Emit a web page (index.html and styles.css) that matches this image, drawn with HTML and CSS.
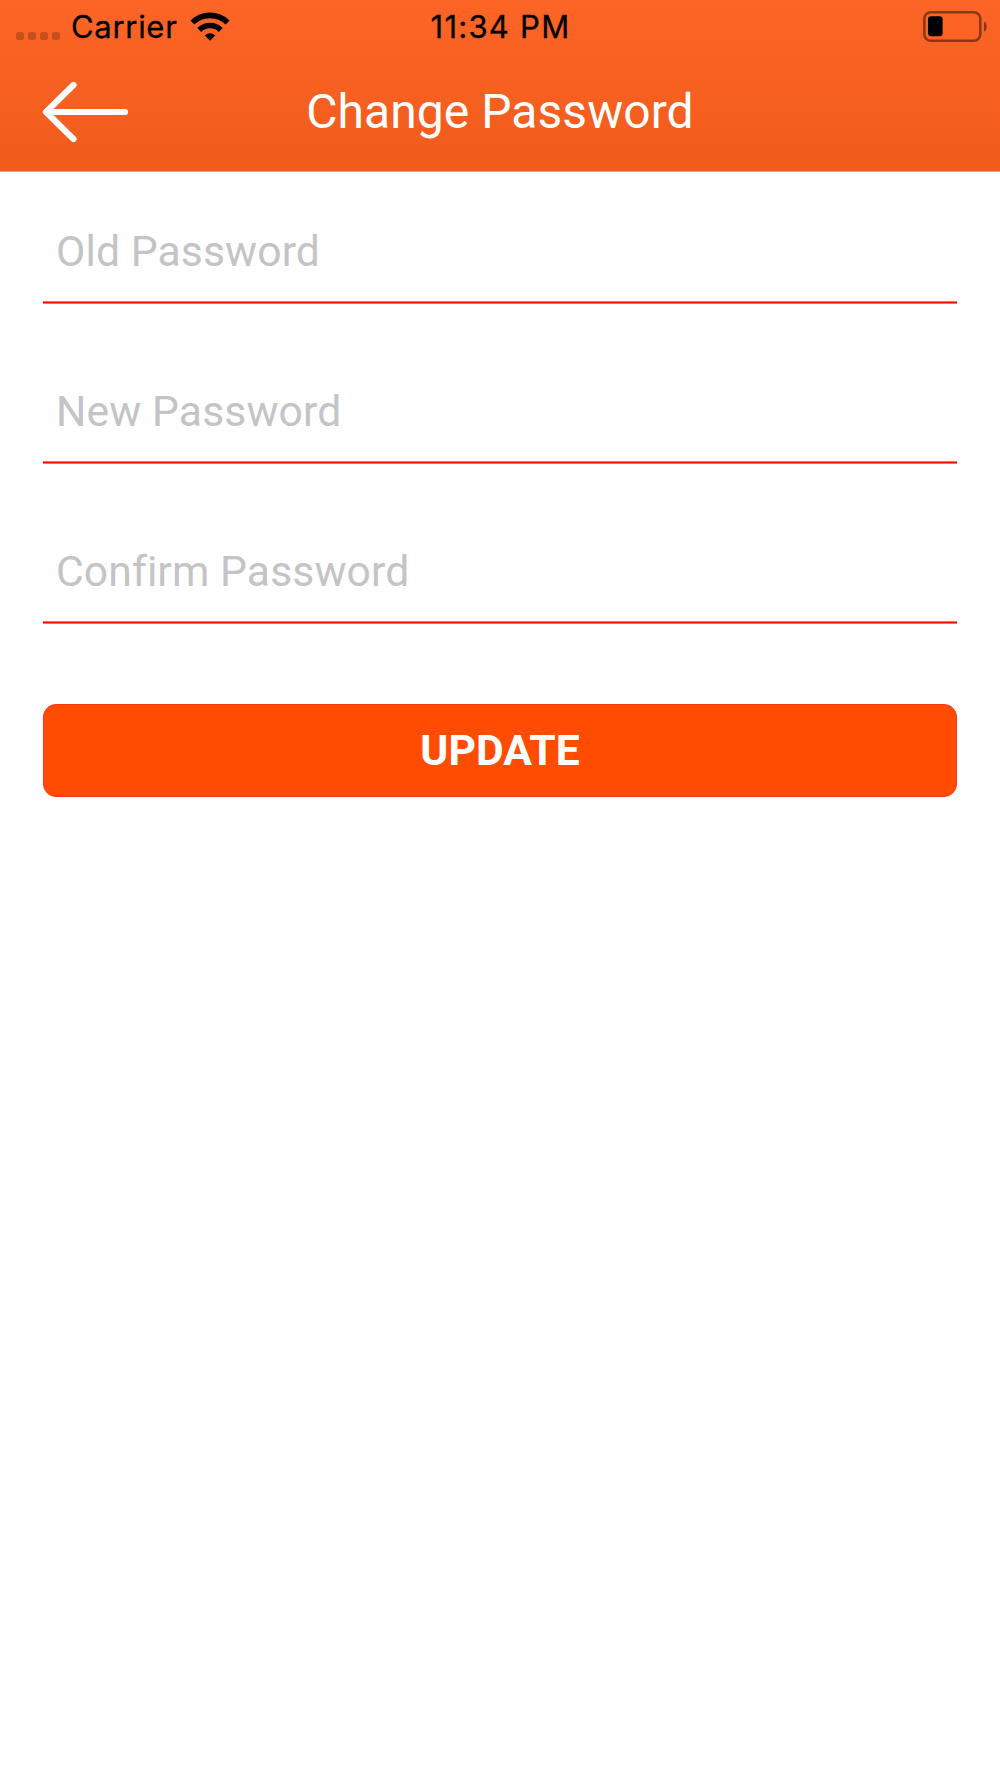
FILE: index.html
```html
<!DOCTYPE html>
<html lang="en">
<head>
<meta charset="utf-8">
<title>Change Password</title>
<link rel="stylesheet" href="styles.css">
</head>
<body>
<header class="header">
  <div class="status">
    <div class="network">
      <div class="signal"><i class="dot"></i><i class="dot"></i><i class="dot"></i><i class="dot"></i></div>
      <span class="carrier">Carrier</span>
      <svg class="wifi" width="40" height="30" viewBox="0 0 40 30" fill="none" stroke="#000" stroke-width="5.6">
        <path d="M2.400 10.600a25 25 0 0 1 35.200 0"/>
        <path d="M9.200 17.900a15.600 15.600 0 0 1 21.600 0"/>
        <path d="M14.800 23.400a7.600 7.600 0 0 1 10.400 0L20 28.700z" fill="#000" stroke="none"/>
      </svg>
    </div>
    <time class="time">11:34 PM</time>
    <svg class="battery" width="64" height="31" viewBox="0 0 64 31">
      <rect x="1.3" y="1.3" width="56" height="28.4" rx="6.5" fill="none" stroke="#000" stroke-opacity=".45" stroke-width="2.500"/>
      <rect x="5" y="5.200" width="14.600" height="20" rx="3"/>
      <path d="M61 10.500q2.700 1.200 2.700 5t-2.700 5z" fill-opacity=".45"/>
    </svg>
  </div>
  <nav class="navbar">
    <svg class="back" width="88" height="62" viewBox="0 0 88 62" fill="none" stroke="#fff" stroke-width="6.200" stroke-linecap="round" stroke-linejoin="round">
      <path d="M31.500 4 4 31l27.500 27M4.500 31H83"/>
    </svg>
    <h1 class="title">Change Password</h1>
  </nav>
</header>
<main class="form">
  <div class="field"><span class="label">Old Password</span></div>
  <div class="field"><span class="label">New Password</span></div>
  <div class="field"><span class="label">Confirm Password</span></div>
  <button class="update" type="button">UPDATE</button>
</main>
</body>
</html>
```
FILE: styles.css
```css
* { box-sizing: border-box; }
body { margin: 0; min-height: 1778px; background: #fff; font-family: Roboto, sans-serif; }
.header { height: 172px; background: linear-gradient(#fc6526, #f15b1c); border-bottom: 1px solid #cfa695; }
.status { height: 53px; display: grid; grid-template-columns: 1fr auto 1fr; align-items: center; padding: 0 13px 0 16px; font: 400 31px/52px Inter, sans-serif; color: #000; }
.network { display: flex; align-items: center; }
.signal { display: flex; gap: 4px; padding-top: 19px; }
.dot { width: 8px; height: 8px; border-radius: 2.5px; background: rgba(0, 0, 0, .2); }
.carrier { margin: 0 12px 0 11px; letter-spacing: .7px; -webkit-text-stroke: .3px #000; }
.time { position: relative; left: -1px; letter-spacing: 1.25px; -webkit-text-stroke: .3px #000; }
.battery { justify-self: end; }
.navbar { height: 117px; display: grid; grid-template-columns: 1fr auto 1fr; align-items: center; padding: 0 42px; }
.title { margin: 0; font-size: 48px; font-weight: 400; line-height: 60px; letter-spacing: .05px; color: #fff; }
.form { padding: 0 43px; }
.field { height: 160px; display: flex; align-items: flex-end; padding: 0 13px 26px; background: linear-gradient(#ff6d60 1px, #ff0a00 1px 2px, #ff6d60 2px) bottom / 100% 3px no-repeat; }
.field:first-child { height: 132px; }
.label { font-size: 42.67px; line-height: 54px; letter-spacing: .1px; font-variant-ligatures: none; color: #c4c4c6; white-space: nowrap; }
.update { display: block; width: 100%; height: 93px; margin-top: 80px; padding: 0; border: 1px solid #ff3218; border-radius: 13px; background: #ff4c00; color: #fff; font: 700 42.67px/91px Roboto, sans-serif; }
```
